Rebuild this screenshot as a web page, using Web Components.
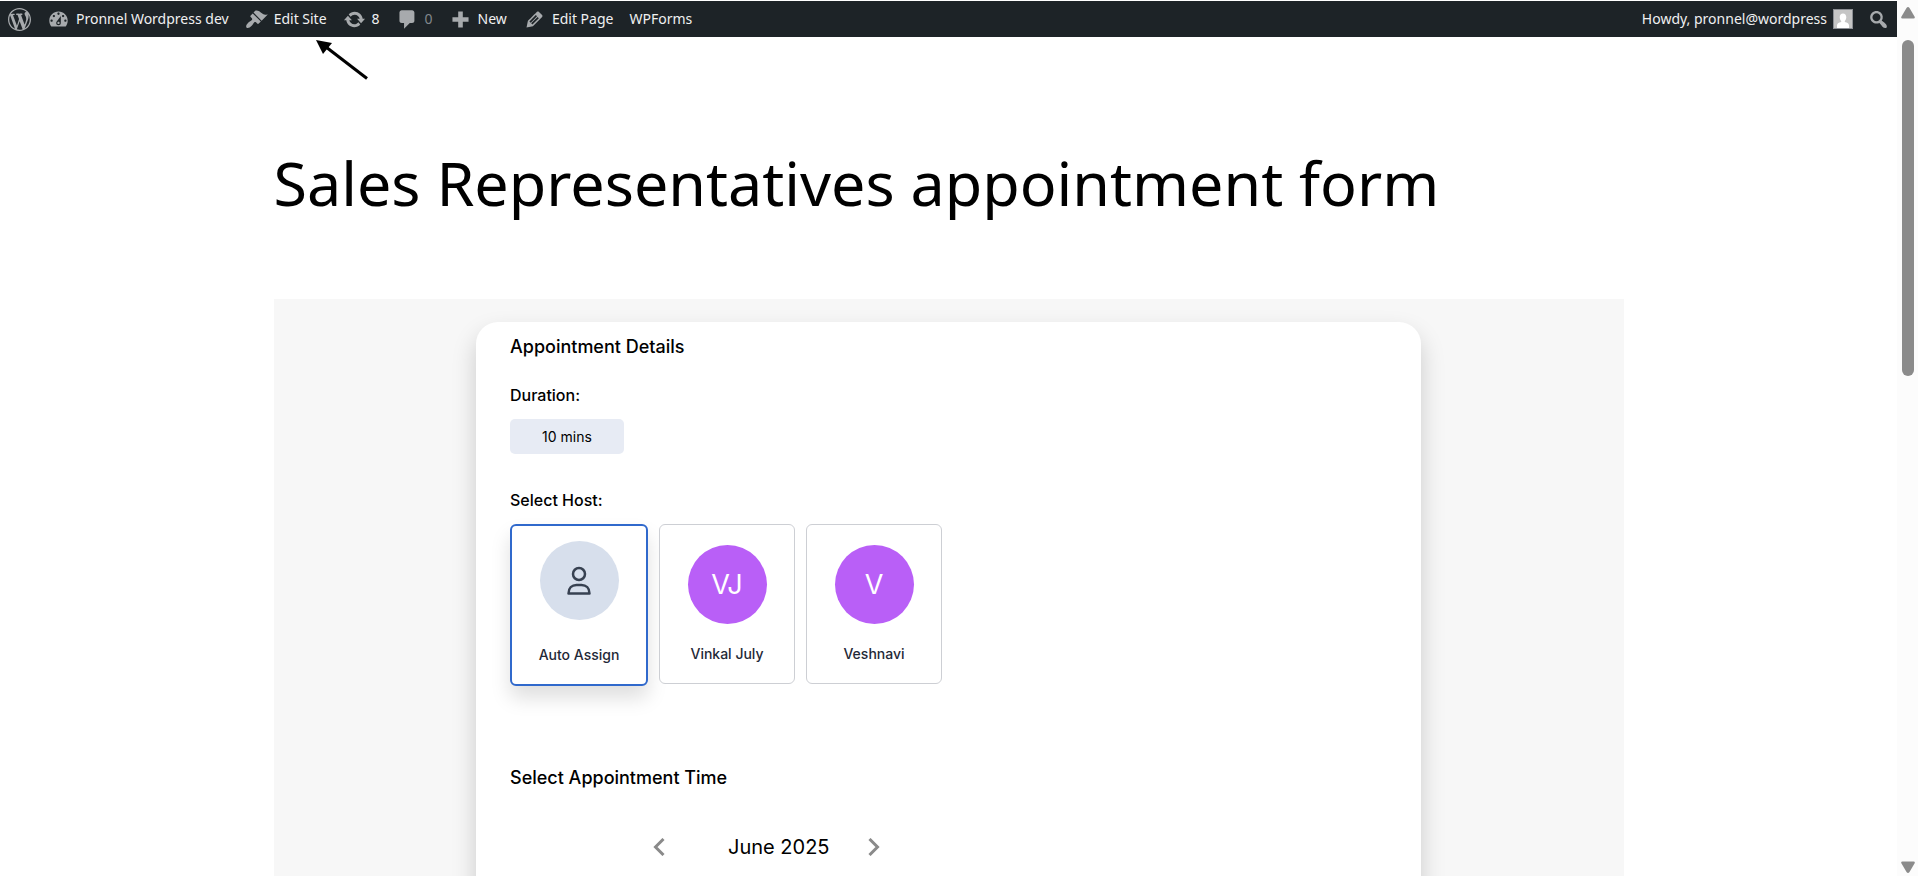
<!DOCTYPE html>
<html lang="en">
<head>
<meta charset="utf-8">
<title>Sales Representatives appointment form</title>
<style>
    html, body {
        margin: 0;
        height: 100%;
    }
    body {
        background: #ffffff;
        color: #000000;
        font-family: "Noto Sans", "Open Sans", sans-serif;
        overflow: hidden;
    }
</style>
</head>
<body>
<site-shell>
    <admin-bar slot="bar">
        <bar-item icon="wordpress" label="About WordPress"></bar-item>
        <bar-item icon="dashboard">Pronnel Wordpress dev</bar-item>
        <bar-item icon="brush">Edit Site</bar-item>
        <bar-item icon="update">8</bar-item>
        <bar-item icon="comment" muted>0</bar-item>
        <bar-item icon="plus">New</bar-item>
        <bar-item icon="edit">Edit Page</bar-item>
        <bar-item>WPForms</bar-item>
        <bar-item slot="end" icon="avatar" reverse>Howdy, pronnel@wordpress</bar-item>
        <bar-item slot="end" icon="search" label="Search"></bar-item>
    </admin-bar>
    <pointer-arrow slot="over"></pointer-arrow>
    <page-article>
        <span slot="title">Sales Representatives appointment form</span>
        <appointment-form>
            <host-card selected name="Auto Assign"></host-card>
            <host-card name="Vinkal July" initials="VJ"></host-card>
            <host-card name="Veshnavi" initials="V"></host-card>
            <month-nav slot="calendar">June 2025</month-nav>
        </appointment-form>
    </page-article>
</site-shell>

<script>
const icons = {
    wordpress: '<path d="M20 10c0-5.51-4.49-10-10-10C4.48 0 0 4.49 0 10c0 5.52 4.48 10 10 10 5.51 0 10-4.48 10-10zM7.78 15.37L4.37 6.22c.55-.02 1.17-.08 1.17-.08.5-.06.44-1.13-.06-1.11 0 0-1.45.11-2.37.11-.18 0-.37 0-.58-.01C4.12 2.69 6.87 1.11 10 1.11c2.33 0 4.45.87 6.05 2.34-.68-.11-1.65.39-1.65 1.58 0 .74.45 1.36.9 2.1.35.61.55 1.36.55 2.46 0 1.49-1.4 5-1.4 5l-3.03-8.37c.54-.02.82-.17.82-.17.5-.05.44-1.25-.06-1.22 0 0-1.44.12-2.38.12-.87 0-2.33-.12-2.33-.12-.5-.03-.56 1.2-.06 1.22l.92.08 1.26 3.41zM17.41 10c.24-.64.74-1.87.43-4.25.7 1.29 1.05 2.71 1.05 4.25 0 3.29-1.73 6.24-4.4 7.78.97-2.59 1.94-5.2 2.92-7.78zM6.1 18.09C3.12 16.65 1.11 13.53 1.11 10c0-1.3.23-2.48.72-3.59C3.25 10.3 4.67 14.2 6.1 18.09zm4.03-6.63l2.58 6.98c-.86.29-1.76.45-2.71.45-.79 0-1.57-.11-2.29-.33.81-2.38 1.62-4.74 2.42-7.1z"/>',
    dashboard: '<path fill-rule="evenodd" d="M3.76 16h12.48c1.1-1.37 1.76-3.11 1.76-5 0-4.42-3.58-8-8-8s-8 3.58-8 8c0 1.89.66 3.63 1.76 5zM10 4c.55 0 1 .45 1 1s-.45 1-1 1-1-.45-1-1 .45-1 1-1zM6 6c.55 0 1 .45 1 1s-.45 1-1 1-1-.45-1-1 .45-1 1-1zm8 0c.55 0 1 .45 1 1s-.45 1-1 1-1-.45-1-1 .45-1 1-1zm-5.37 5.55L12 7v6c0 1.1-.9 2-2 2s-2-.9-2-2c0-.57.24-1.08.63-1.45zM4 10c.55 0 1 .45 1 1s-.45 1-1 1-1-.45-1-1 .45-1 1-1zm12 0c.55 0 1 .45 1 1s-.45 1-1 1-1-.45-1-1 .45-1 1-1zm-5 3c0-.55-.45-1-1-1s-1 .45-1 1 .45 1 1 1 1-.45 1-1z"/>',
    brush: '<path d="M14.48 11.06L7.41 3.99l1.5-1.5c.5-.56 2.3-.47 3.51.32 1.21.8 1.43 1.28 2.91 2.1 1.18.64 2.45 1.26 4.45.85zm-.71.71L6.7 4.7 4.93 6.47c-.39.39-.39 1.02 0 1.41l1.06 1.06c.39.39.39 1.03 0 1.42-.6.6-1.43 1.11-2.21 1.69-.35.26-.7.53-1.01.84C1.43 14.23.4 16.08 1.4 17.07c.99 1 2.84-.03 4.18-1.36.31-.31.58-.66.85-1.02.57-.78 1.08-1.61 1.69-2.21.39-.39 1.02-.39 1.41 0l1.06 1.06c.39.39 1.02.39 1.41 0z"/>',
    update: '<path d="M10.2 3.28c3.53 0 6.43 2.61 6.92 6h2.08l-3.5 4-3.5-4h2.32c-.45-1.97-2.21-3.45-4.32-3.45-1.45 0-2.73.71-3.54 1.78L4.95 5.66C6.23 4.2 8.11 3.28 10.2 3.28zm-.4 13.44c-3.52 0-6.43-2.61-6.92-6H.8l3.5-4c1.17 1.33 2.33 2.67 3.5 4H5.48c.45 1.97 2.21 3.45 4.32 3.45 1.45 0 2.73-.71 3.54-1.78l1.71 1.95c-1.28 1.46-3.15 2.38-5.25 2.38z"/>',
    comment: '<path d="M5 2h9c1.1 0 2 .9 2 2v7c0 1.1-.9 2-2 2h-2l-5 5v-5H5c-1.1 0-2-.9-2-2V4c0-1.1.9-2 2-2z"/>',
    plus: '<path d="M17 8v4h-5v5H8v-5H3V8h5V3h4v5z"/>',
    edit: '<path fill-rule="evenodd" d="M13.89 3.39l2.71 2.72c.46.46.42 1.24.03 1.64l-8.01 8.02-5.56 1.16 1.16-5.58s7.6-7.63 7.99-8.03c.39-.39 1.22-.39 1.68.07zm-2.73 2.79l-5.59 5.61 1.11 1.11 5.54-5.65zm-2.97 8.23l5.58-5.6-1.07-1.08-5.59 5.6z"/>',
    search: '<path fill-rule="evenodd" d="M12.14 4.18c1.87 1.87 2.11 4.75.72 6.89.12.1.22.21.36.31.2.16.47.36.81.59.34.24.56.39.66.47.42.31.73.57.94.78.32.32.6.65.84 1 .25.35.44.69.59 1.04.14.35.21.68.18 1-.02.32-.14.59-.36.81s-.49.34-.81.36c-.31.02-.65-.04-.99-.19-.35-.14-.7-.34-1.04-.59-.35-.24-.68-.52-1-.84-.21-.21-.47-.52-.77-.93-.1-.13-.25-.35-.47-.66-.22-.32-.4-.57-.56-.78-.16-.2-.29-.35-.44-.5-2.07 1.09-4.69.76-6.44-.98-2.14-2.15-2.14-5.64 0-7.78 2.15-2.15 5.63-2.15 7.78 0zm-1.41 6.36c1.36-1.37 1.36-3.58 0-4.95-1.37-1.37-3.59-1.37-4.95 0-1.37 1.37-1.37 3.58 0 4.95 1.36 1.37 3.58 1.37 4.95 0z"/>',
    avatar: '<path fill="#8c8f94" d="M0 0h20v20H0z"/><path fill="#c5c5c5" d="M1 1h18v18H1z"/><path fill="#ffffff" d="M10 4.500c2 0 3.300 1.500 3.300 3.700 0 1.500-.6 2.900-1.500 3.700v1.200c2.800.6 4.200 1.800 4.200 3.400V19H4v-2.500c0-1.600 1.400-2.800 4.200-3.400v-1.200c-.9-.8-1.500-2.200-1.500-3.700 0-2.200 1.300-3.700 3.300-3.700z"/>'
};

class SiteShell extends HTMLElement {
    constructor() {
        super();
        this.attachShadow({mode: 'open'});
    }

    connectedCallback() {
        this.shadowRoot.innerHTML = `<style>
            :host {
                display: grid;
                grid-template-columns: minmax(0, 1fr) 21px;
                height: 100vh;
            }
            .page {
                overflow: hidden;
                padding-top: 1px;
                position: relative;
            }
        </style>
        <div class="page">
            <slot name="bar"></slot>
            <slot name="over"></slot>
            <slot></slot>
        </div>
        <scroll-rail></scroll-rail>`;
    }
}

class ScrollRail extends HTMLElement {
    constructor() {
        super();
        this.attachShadow({mode: 'open'});
    }

    connectedCallback() {
        this.shadowRoot.innerHTML = `<style>
            :host {
                align-items: center;
                background: #fcfcfc;
                box-sizing: border-box;
                display: flex;
                flex-direction: column;
                padding: 7px 0 3px;
            }
            svg {
                display: block;
                fill: #8b8b8b;
                flex: none;
            }
            .track {
                flex: 1;
                margin: 21px 0;
                width: 12px;
            }
            .thumb {
                background: #8b8b8b;
                border-radius: 6px;
                height: 42%;
            }
        </style>
        <svg width="14" height="12" viewBox="0 0 14 12"><path d="M5.500 1q1.500-2 3 0l5 8.500q1 2-1 2h-11q-2 0-1-2z"/></svg>
        <div class="track"><div class="thumb"></div></div>
        <svg width="14" height="12" viewBox="0 0 14 12"><path d="M5.500 11q1.500 2 3 0l5-8.500q1-2-1-2h-11q-2 0-1 2z"/></svg>`;
    }
}

class AdminBar extends HTMLElement {
    constructor() {
        super();
        this.attachShadow({mode: 'open'});
    }

    connectedCallback() {
        this.shadowRoot.innerHTML = `<style>
            :host {
                display: block;
            }
            nav {
                background: #1d2327;
                display: flex;
                height: 36px;
                justify-content: space-between;
            }
            div {
                display: flex;
            }
        </style>
        <nav aria-label="Toolbar">
            <div><slot></slot></div>
            <div><slot name="end"></slot></div>
        </nav>`;
    }
}

class BarItem extends HTMLElement {
    constructor() {
        super();
        this.attachShadow({mode: 'open'});
    }

    connectedCallback() {
        const icon = this.getAttribute('icon');
        const label = this.getAttribute('label');
        this.shadowRoot.innerHTML = `<style>
            :host {
                display: flex;
            }
            a {
                align-items: center;
                color: #f0f0f1;
                display: flex;
                font-size: 14px;
                gap: 6px;
                line-height: 36px;
                padding: 0 8px;
                text-decoration: none;
                white-space: nowrap;
            }
            svg {
                display: block;
                fill: #a7aaad;
                height: 23px;
                width: 23px;
            }
            :host([slot="end"]) a {
                padding: 0 7px;
            }
            :host([reverse]) a {
                flex-direction: row-reverse;
            }
            :host([reverse]) svg {
                height: 20px;
                width: 20px;
            }
            :host([muted]) a {
                color: #82878c;
            }
        </style>
        <a href="#" ${label ? `aria-label="${label}"` : ''}>
            ${icon ? `<svg viewBox="0 0 20 20" aria-hidden="true">${icons[icon]}</svg>` : ''}
            <slot></slot>
        </a>`;
    }
}

class PointerArrow extends HTMLElement {
    constructor() {
        super();
        this.attachShadow({mode: 'open'});
    }

    connectedCallback() {
        this.shadowRoot.innerHTML = `<style>
            :host {
                left: 316px;
                position: absolute;
                top: 40px;
            }
            svg {
                display: block;
            }
        </style>
        <svg width="54" height="42" viewBox="0 0 54 42" aria-hidden="true">
            <path d="M0 0l16 3-9 11z"/>
            <path d="M10 7l41 31.500" stroke="#000000" stroke-width="3"/>
        </svg>`;
    }
}

class PageArticle extends HTMLElement {
    constructor() {
        super();
        this.attachShadow({mode: 'open'});
    }

    connectedCallback() {
        this.shadowRoot.innerHTML = `<style>
            :host {
                display: block;
                margin: 0 auto;
                max-width: 1350px;
                padding-top: 104px;
            }
            h1 {
                font-size: 61px;
                font-weight: 400;
                line-height: 84px;
                margin: 0 0 74px;
                white-space: nowrap;
            }
        </style>
        <h1><slot name="title"></slot></h1>
        <slot></slot>`;
    }
}

class AppointmentForm extends HTMLElement {
    constructor() {
        super();
        this.attachShadow({mode: 'open'});
    }

    connectedCallback() {
        this.shadowRoot.innerHTML = `<style>
            :host {
                background: #f7f7f7;
                display: block;
                font-family: Inter, sans-serif;
                padding: 23px 0;
            }
            form {
                background: #ffffff;
                border-radius: 22px;
                box-shadow: 0 12px 25px rgba(0, 0, 0, 0.18);
                box-sizing: border-box;
                margin: 0 auto;
                min-height: 700px;
                padding: 13px 34px;
                width: 70%;
            }
            h2, h3 {
                font-weight: 500;
                line-height: 24px;
                margin: 0;
            }
            h2 {
                font-size: 18px;
            }
            h3 {
                font-size: 16px;
                margin-bottom: 12px;
            }
            .duration {
                margin: 24px 0 34px;
            }
            .duration button {
                background: #e7ebf4;
                border: 0;
                border-radius: 5px;
                color: #000000;
                display: block;
                font: 400 14px/35px Inter, sans-serif;
                padding: 0;
                width: 114px;
            }
            .hosts {
                align-items: flex-start;
                display: flex;
                gap: 11px;
                margin-bottom: 80px;
            }
        </style>
        <form>
            <h2>Appointment Details</h2>
            <div class="duration">
                <h3>Duration:</h3>
                <button type="button">10 mins</button>
            </div>
            <h3 id="host">Select Host:</h3>
            <div class="hosts" role="group" aria-labelledby="host"><slot></slot></div>
            <h2>Select Appointment Time</h2>
            <slot name="calendar"></slot>
        </form>`;
    }
}

class HostCard extends HTMLElement {
    constructor() {
        super();
        this.attachShadow({mode: 'open'});
        this.select = this.select.bind(this);
    }

    connectedCallback() {
        const initials = this.getAttribute('initials');
        const person = `<svg width="26" height="30" viewBox="0 0 26 30" fill="none" stroke="#374151" stroke-width="2.500" stroke-linejoin="round" aria-hidden="true">
            <circle cx="13" cy="8" r="6"/>
            <path d="M2.500 27.500c0-5.500 3.500-8.500 8-8.500h5c4.500 0 8 3 8 8.500z"/>
        </svg>`;
        this.shadowRoot.innerHTML = `<style>
            :host {
                display: block;
            }
            label {
                align-items: center;
                background: #ffffff;
                border: 1px solid #cdcfd4;
                border-radius: 6px;
                box-sizing: border-box;
                cursor: pointer;
                display: flex;
                flex-direction: column;
                gap: 20px;
                padding: 20px 0 19px;
                width: 136px;
            }
            input {
                appearance: none;
                height: 0;
                margin: 0;
                position: absolute;
                width: 0;
            }
            .avatar {
                align-items: center;
                background: #b95ff7;
                border-radius: 50%;
                color: #ffffff;
                display: flex;
                font-size: 27px;
                height: 79px;
                justify-content: center;
                width: 79px;
            }
            .avatar.auto {
                background: #d7dfec;
            }
            .name {
                color: #1f2937;
                font-size: 14px;
                font-weight: 500;
                line-height: 20px;
            }
            :host([selected]) label {
                border: 2px solid #3069cc;
                box-shadow: 0 12px 20px rgba(0, 0, 0, 0.13);
                gap: 25px;
                padding: 15px 0 19px;
                width: 138px;
            }
        </style>
        <label>
            <input type="radio" ${this.hasAttribute('selected') ? 'checked' : ''}>
            <span class="avatar ${initials ? '' : 'auto'}">${initials || person}</span>
            <span class="name">${this.getAttribute('name')}</span>
        </label>`;
        this.shadowRoot.querySelector('input').addEventListener('change', this.select);
    }

    // each radio sits in its own shadow root, so the group is kept in step here
    select() {
        this.parentElement.querySelectorAll('host-card').forEach(card => {
            card.toggleAttribute('selected', card === this);
            card.shadowRoot.querySelector('input').checked = card === this;
        });
    }
}

class MonthNav extends HTMLElement {
    constructor() {
        super();
        this.attachShadow({mode: 'open'});
    }

    connectedCallback() {
        this.shadowRoot.innerHTML = `<style>
            :host {
                align-items: center;
                display: flex;
                font-size: 20px;
                line-height: 28px;
                padding: 43px 0 0 137px;
            }
            button {
                background: none;
                border: 0;
                display: flex;
                justify-content: center;
                padding: 0;
                width: 24px;
            }
            svg {
                fill: none;
                stroke: #8a8a8a;
                stroke-width: 3;
            }
            .month {
                margin: 0 32px 0 57px;
            }
        </style>
        <button type="button" aria-label="Previous month"><svg width="12" height="18" viewBox="0 0 12 18"><path d="M10.500 1L2.500 9l8 8"/></svg></button>
        <span class="month"><slot></slot></span>
        <button type="button" aria-label="Next month"><svg width="12" height="18" viewBox="0 0 12 18"><path d="M1.500 1l8 8-8 8"/></svg></button>`;
    }
}

customElements.define('site-shell', SiteShell);
customElements.define('scroll-rail', ScrollRail);
customElements.define('admin-bar', AdminBar);
customElements.define('bar-item', BarItem);
customElements.define('pointer-arrow', PointerArrow);
customElements.define('page-article', PageArticle);
customElements.define('appointment-form', AppointmentForm);
customElements.define('host-card', HostCard);
customElements.define('month-nav', MonthNav);
</script>
</body>
</html>
